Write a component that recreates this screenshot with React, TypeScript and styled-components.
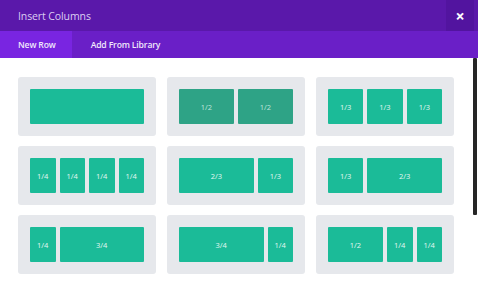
import React from "react";
import styled, {createGlobalStyle} from "styled-components";

const layouts: {cols: string[]; dim?: boolean}[] = [
    {cols: ["1"]},
    {cols: ["1/2", "1/2"], dim: true},
    {cols: ["1/3", "1/3", "1/3"]},
    {cols: ["1/4", "1/4", "1/4", "1/4"]},
    {cols: ["2/3", "1/3"]},
    {cols: ["1/3", "2/3"]},
    {cols: ["1/4", "3/4"]},
    {cols: ["3/4", "1/4"]},
    {cols: ["1/2", "1/4", "1/4"]},
]

const fraction = (label: string) => {
    const [a, b] = label.split("/").map(Number)
    return b ? a / b : 1
}

export default function App() {
    return (
        <>
            <Global/>
            <Modal>
                <Header>
                    <Title>Insert Columns</Title>
                    <Close>×</Close>
                </Header>
                <Tabs>
                    <Tab $active>New Row</Tab>
                    <Tab>Add From Library</Tab>
                </Tabs>
                <Body>
                    <Grid>
                        {layouts.map((layout, i) => (
                            <Card key={i}>
                                {layout.cols.map((c, j) => (
                                    <Column key={j} $dim={layout.dim} $frac={fraction(c)}>
                                        {c === "1" ? "" : c}
                                    </Column>
                                ))}
                            </Card>
                        ))}
                    </Grid>
                    <Thumb/>
                </Body>
            </Modal>
        </>
    )
}

const Global = createGlobalStyle`
  body {
    margin: 0;
    background: #ffffff;
    font-family: "Open Sans", "Liberation Sans", sans-serif;
  }
`

const Modal = styled.div`
  width: 478px;
  height: 281px;
  display: flex;
  flex-direction: column;
  overflow: hidden;
`

const Header = styled.div`
  height: 31px;
  display: flex;
  align-items: center;
  background: #5a18aa;
  padding-left: 18px;
`

const Title = styled.span`
  flex: 1;
  font-size: 10.5px;
  letter-spacing: -0.1px;
  color: #dccdf2;
`

const Close = styled.div`
  width: 28px;
  height: 31px;
  margin-right: 4px;
  display: flex;
  align-items: center;
  justify-content: center;
  background: #52149f;
  color: #ffffff;
  font-size: 16px;
  font-weight: 700;
`

const Tabs = styled.div`
  height: 27px;
  display: flex;
  background: #6a1fc7;
`

const Tab = styled.div<{ $active?: boolean }>`
  display: flex;
  align-items: center;
  padding: 0 ${({$active}) => ($active ? '16px 0 18px' : '19px 0 19px')};
  font-size: 8.6px;
  font-weight: 600;
  letter-spacing: -0.15px;
  color: #f1e9fb;
  background: ${({$active}) => ($active ? '#7925e1' : 'transparent')};
`

const Body = styled.div`
  position: relative;
  flex: 1;
  background: #ffffff;
  padding: 19px 0 0 18px;
`

const Grid = styled.div`
  display: grid;
  grid-template-columns: repeat(3, 138px);
  column-gap: 11px;
  row-gap: 10px;
`

const Card = styled.div`
  height: 59px;
  box-sizing: border-box;
  padding: 12px;
  display: flex;
  gap: 4px;
  background: #e6e8ec;
  border-radius: 3px;
`

const Column = styled.div<{ $dim?: boolean; $frac: number }>`
  flex: 0 0 ${({$frac}) => $frac * 118 - 4}px;
  display: flex;
  align-items: center;
  justify-content: center;
  background: ${({$dim}) => ($dim ? '#2ea386' : '#1bbb98')};
  color: ${({$dim}) => ($dim ? '#bfe6dc' : '#e3f7f1')};
  font-size: 7.5px;
  border-radius: 1px;
`

const Thumb = styled.div`
  position: absolute;
  top: 0;
  right: 1px;
  width: 4px;
  height: 157px;
  background: #262626;
  border-radius: 1px;
`
